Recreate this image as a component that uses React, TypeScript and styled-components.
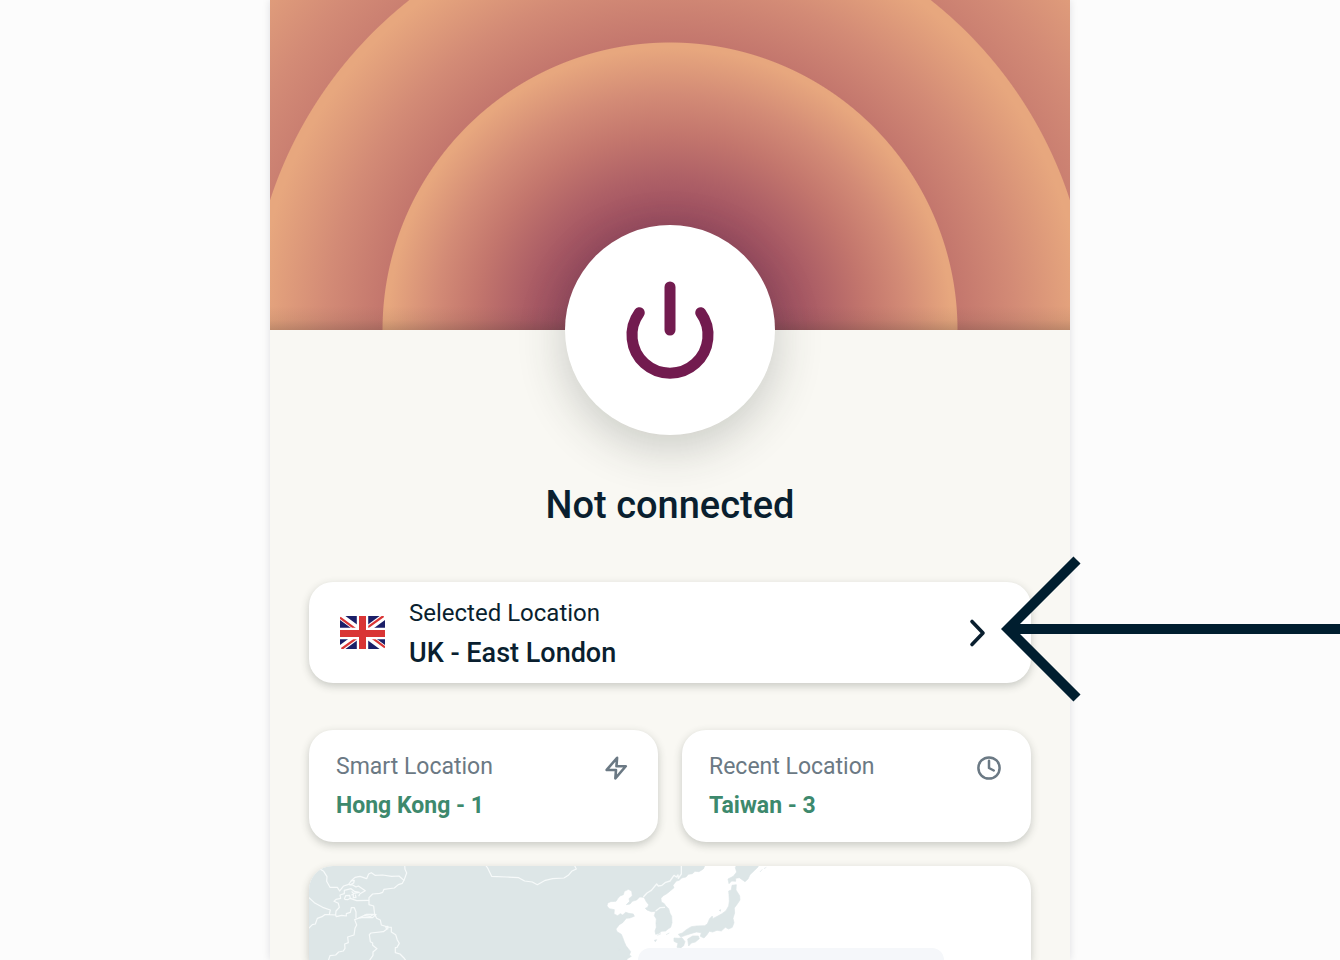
import React from 'react';
import styled, { createGlobalStyle } from 'styled-components';

const GlobalStyle = createGlobalStyle`
  * { box-sizing: border-box; }
  body { margin: 0; background: #fcfcfc; font-family: Roboto, "Liberation Sans", sans-serif; }
  button { font: inherit; color: inherit; border: 0; text-align: left; cursor: pointer; }
`;

const Page = styled.div`
  height: 100vh;
  overflow: hidden;
  display: flex;
  justify-content: center;
`;

const Window = styled.main`
  width: 100%;
  max-width: 800px;
  display: flex;
  flex-direction: column;
  background: #f9f8f3;
  box-shadow: 0 0 8px rgba(0, 20, 40, 0.12);
`;

const stops = '#7a2350 0%, #994b60 36%, #ad5f66 52%, #c3766d 68%, #d38b76 82%, #e7a77e 98%';

const Hero = styled.div`
  flex: none;
  height: 330px;
  background:
    linear-gradient(to top, rgba(60, 50, 40, 0.22), rgba(60, 50, 40, 0.07) 10px, transparent 24px),
    radial-gradient(circle 288px at 50% 100%, ${stops}, #e7a77e calc(100% - 1px), transparent 100%),
    radial-gradient(circle 421px at 50% 100%, ${stops}, #e7a77e calc(100% - 1px), transparent 100%),
    radial-gradient(circle 566px at 50% 100%, ${stops});
`;

const Sheet = styled.section`
  flex: 1;
  min-height: 0;
  display: flex;
  flex-direction: column;
  align-items: stretch;
  padding: 0 39px;
`;

const PowerButton = styled.button`
  flex: none;
  align-self: center;
  display: grid;
  place-items: center;
  width: 210px;
  height: 210px;
  margin-top: -105px;
  padding: 0;
  border-radius: 50%;
  background: #fff;
  box-shadow: 0 12px 48px rgba(40, 50, 40, 0.24);
`;

const Status = styled.h1`
  margin: 46px 0 53px;
  font-size: 38px;
  line-height: 48px;
  font-weight: 500;
  text-align: center;
  color: #0a1f2f;
`;

const LocationRow = styled.div`
  position: relative;
  flex: none;
`;

const Card = styled.button`
  border-radius: 24px;
  background: #fff;
  box-shadow: 0 3px 8px rgba(40, 50, 40, 0.24);
`;

const LocationCard = styled(Card)`
  display: flex;
  align-items: center;
  width: 100%;
  height: 101px;
  padding: 0 36px 0 31px;
  gap: 24px;
  color: #0a1f2f;
`;

const Lines = styled.span`
  flex: 1;
  display: flex;
  flex-direction: column;
`;

const Label = styled.span<{ $large?: boolean }>`
  font-size: ${({ $large }) => ($large ? 24 : 23)}px;
  line-height: 40px;
`;

const Place = styled.span`
  font-size: 27px;
  line-height: 40px;
  font-weight: 500;
`;

const Pointer = styled.div`
  position: absolute;
  top: -26px;
  right: calc(361px - 50vw);
  width: calc(50vw - 331px);
  height: 146px;
  display: flex;
  align-items: center;
  pointer-events: none;
  color: #001e2f;
`;

const PointerHead = styled.svg`
  flex: none;
`;

const Shaft = styled.span`
  flex: 1;
  height: 10px;
  background: currentColor;
`;

const Shortcuts = styled.div`
  flex: none;
  display: grid;
  grid-template-columns: 1fr 1fr;
  gap: 24px;
  margin: 47px 0 24px;
`;

const ShortcutCard = styled(Card)`
  display: flex;
  align-items: flex-start;
  height: 112px;
  padding: 17px 29px 17px 27px;
  color: #6b7984;

  svg { margin-top: 8px; }
`;

const ShortcutPlace = styled.span`
  font-size: 23px;
  line-height: 38px;
  font-weight: 700;
  color: #3d896d;
`;

const MapCard = styled.div`
  position: relative;
  flex: 1;
  min-height: 94px;
  border-radius: 24px 24px 0 0;
  background: #fff;
  box-shadow: 0 3px 8px rgba(40, 50, 40, 0.24);
  overflow: hidden;
`;

const MapArt = styled.svg`
  display: block;
`;

const MapPanel = styled.div`
  position: absolute;
  top: 82px;
  bottom: 0;
  left: 329px;
  width: 306px;
  border-radius: 20px 20px 0 0;
  background: #f5f7fa;
`;

const PowerIcon = () => (
  <svg width="90" height="100" viewBox="0 0 90 100" fill="none" stroke="#721b4f" strokeWidth="11" strokeLinecap="round" aria-hidden="true">
    <path d="M45 7V50" />
    <path d="M14.3 32.8A38 38 0 1 0 75.7 32.8" />
  </svg>
);

const BoltIcon = () => (
  <svg width="26" height="26" viewBox="0 0 24 24" fill="none" stroke="currentColor" strokeWidth="2.4" strokeLinejoin="round" aria-hidden="true">
    <path d="M13 2.6L3.4 13.8H12L11.4 21.6 21 10.4H12.4z" />
  </svg>
);

const ClockIcon = () => (
  <svg width="26" height="26" viewBox="0 0 24 24" fill="none" stroke="currentColor" strokeWidth="2.3" strokeLinecap="round" strokeLinejoin="round" aria-hidden="true">
    <circle cx="12" cy="12" r="9.8" />
    <path d="M12 5.4V12L16.4 14.3" />
  </svg>
);

const UkFlag = () => (
  <svg width="45" height="33" viewBox="0 0 45 33" role="img" aria-label="United Kingdom">
    <path fill="#1b1f68" d="M0 0H45V33H0z" />
    <path stroke="#fff" strokeWidth="6.4" d="M0 0L45 33M45 0L0 33" />
    <path stroke="#d93535" strokeWidth="2.2" d="M0 1.6L18 14.8M45 31.4L27 18.2M43.5 0L26 12.6M1.5 33L19 20.4" />
    <path stroke="#fff" strokeWidth="11.4" d="M22.5 0V33M0 17.5H45" />
    <path stroke="#d93535" strokeWidth="7" d="M22.5 0V33M0 17.5H45" />
  </svg>
);

const AsiaMap = () => (
  <MapArt width="722" height="105" viewBox="0 0 722 105" aria-hidden="true">
    <g transform="translate(271 -11) scale(.3333)" fill="#dde6e7" stroke="#dde6e7" strokeWidth="2" strokeLinejoin="round">
      <path d="M-813 20H380L370 42 357 50 345 49 337 56 325 58 318 66 305 69 298 76 289 78 279 91 282 98 268 110 259 117 250 122 243 130 244 141 253 146 258 154 266 161 270 175 275 184 276 203 272 217 264 222 257 228 244 229 238 235 227 238 225 228 229 217 228 205 229 192 223 182 227 169 214 170 201 165 196 160 203 157 206 149 199 140 192 127 179 126 170 135 157 139 150 147 139 149 149 139 147 131 157 122 155 108 145 103 133 109 130 119 120 123 114 130 108 139 92 140 83 144 81 153 88 161 103 164 102 177 113 182 121 176 128 180 137 172 146 175 160 177 163 184 149 189 139 190 128 203 118 209 108 222 111 230 124 238 129 250 133 261 138 272 145 281 152 290 148 300 154 304 141 312 138 340H-813z" />
      <path d="M474 20H540L534 36 524 46 510 59 504 72 495 80 478 68 467 70 467 79 455 78 447 86 444 72 460 64 470 51 466 38z" />
      <path d="M456 91L469 89 468 105 479 122 480 135 472 147 463 159 464 174 459 190 462 203 457 217 446 222 436 217 424 228 411 226 398 231 388 229 381 239 372 249 361 244 364 233 349 231 332 236 317 241 302 246 295 238 307 234 319 224 334 215 350 213 374 212 382 207 389 191 397 183 398 191 412 184 426 176 438 167 446 153 448 138 447 119 446 108 454 105z" />
      <path d="M282 249L295 250 306 248 315 260 311 272 302 279 291 277 294 265 282 259zM323 252L338 243 355 243 358 251 346 261 334 264 326 273zM223 256L230 254 226 260zM114 280L120 282 118 287zM418 166L422 164 421 169zM547 43L540 51M559 37L552 41M232 241L243 236M258 239L268 234" />
    </g>
    <g transform="translate(271 -11) scale(.3333)" fill="none" stroke="#f7fafa" strokeWidth="4" strokeLinejoin="round">
      <path d="M190 126L201 114 214 106 230 87 235 93 246 91 257 82 270 78 282 61 289 66 294 60 295 70 304 57 304 28M227 168L240 158 255 157" />
    </g>
    <g transform="translate(-9 -11) scale(.3333)" fill="none" stroke="#f7fafa" strokeWidth="3.6" strokeLinejoin="round">
      <path d="M60 42L71 49 81 65 80 79 90 97 112 97 119 108 131 93 146 88 153 78 165 67 180 64 200 71 206 57 214 53 225 61 248 60 275 64 297 63 312 76 307 85 295 89 283 99 252 103 248 112 239 115 218 117 207 128 207 149 221 153 224 178 230 190 241 195 244 210 263 216 274 217 274 231 287 239 292 255 298 265 291 277 286 278 286 293 300 297 312 309 320 320" />
      <path d="M312 76L320 54 315 43 314 28M26 127L43 143 68 157 91 165 88 179 74 179 66 185 52 190 46 207 37 209 26 220M88 179L107 180 109 185 125 181 139 183 139 176 151 172 154 158 163 158 168 171 168 190M107 180L108 168 118 157 115 145 102 139 108 133 122 130 120 120 133 116 133 106 153 101 163 109 178 112 160 115 155 109M146 88L158 90 168 96 175 93 196 107 180 116 176 124M133 133L137 122 149 121 151 130 143 134 133 133M151 130L170 137 207 136M154 120L160 118 160 128 168 127 166 119M153 78L163 76 161 84 148 91" />
      <path d="M221 178H200L174 190 164 194 170 210 165 220 162 240 143 246 145 263 134 267 135 280 130 288 116 291 107 300 90 302 84 320M174 190L188 187 218 188 228 179 221 178 212 184 192 181M257 215L260 223 250 230 213 234 208 239 211 260 218 264 218 271 231 281 219 291 219 301 206 320M257 215L264 214 263 223" />
      <path d="M555 28L563 39 575 64 621 66 656 68 674 78 697 81 712 89 736 76 758 71 792 69 805 61 815 49 829 42 822 28" />
    </g>
  </MapArt>
);

export default function App() {
  return (
    <Page>
      <GlobalStyle />
      <Window>
        <Hero />
        <Sheet>
          <PowerButton aria-label="Connect">
            <PowerIcon />
          </PowerButton>
          <Status>Not connected</Status>
          <LocationRow>
            <LocationCard>
              <UkFlag />
              <Lines>
                <Label $large>Selected Location</Label>
                <Place>UK - East London</Place>
              </Lines>
              <svg width="36" height="36" viewBox="0 0 36 36" fill="none" stroke="currentColor" strokeWidth="3.6" strokeLinecap="round" strokeLinejoin="round" aria-hidden="true">
                <path d="M13 6.5L24 18 13 29.5" />
              </svg>
            </LocationCard>
            <Pointer>
              <PointerHead width="80" height="146" viewBox="0 0 80 146" fill="none" stroke="currentColor" strokeWidth="10" aria-hidden="true">
                <path d="M76 4L7 73 76 142M7 73H80" />
              </PointerHead>
              <Shaft />
            </Pointer>
          </LocationRow>
          <Shortcuts>
            <ShortcutCard>
              <Lines>
                <Label>Smart Location</Label>
                <ShortcutPlace>Hong Kong - 1</ShortcutPlace>
              </Lines>
              <BoltIcon />
            </ShortcutCard>
            <ShortcutCard>
              <Lines>
                <Label>Recent Location</Label>
                <ShortcutPlace>Taiwan - 3</ShortcutPlace>
              </Lines>
              <ClockIcon />
            </ShortcutCard>
          </Shortcuts>
          <MapCard>
            <AsiaMap />
            <MapPanel />
          </MapCard>
        </Sheet>
      </Window>
    </Page>
  );
}
